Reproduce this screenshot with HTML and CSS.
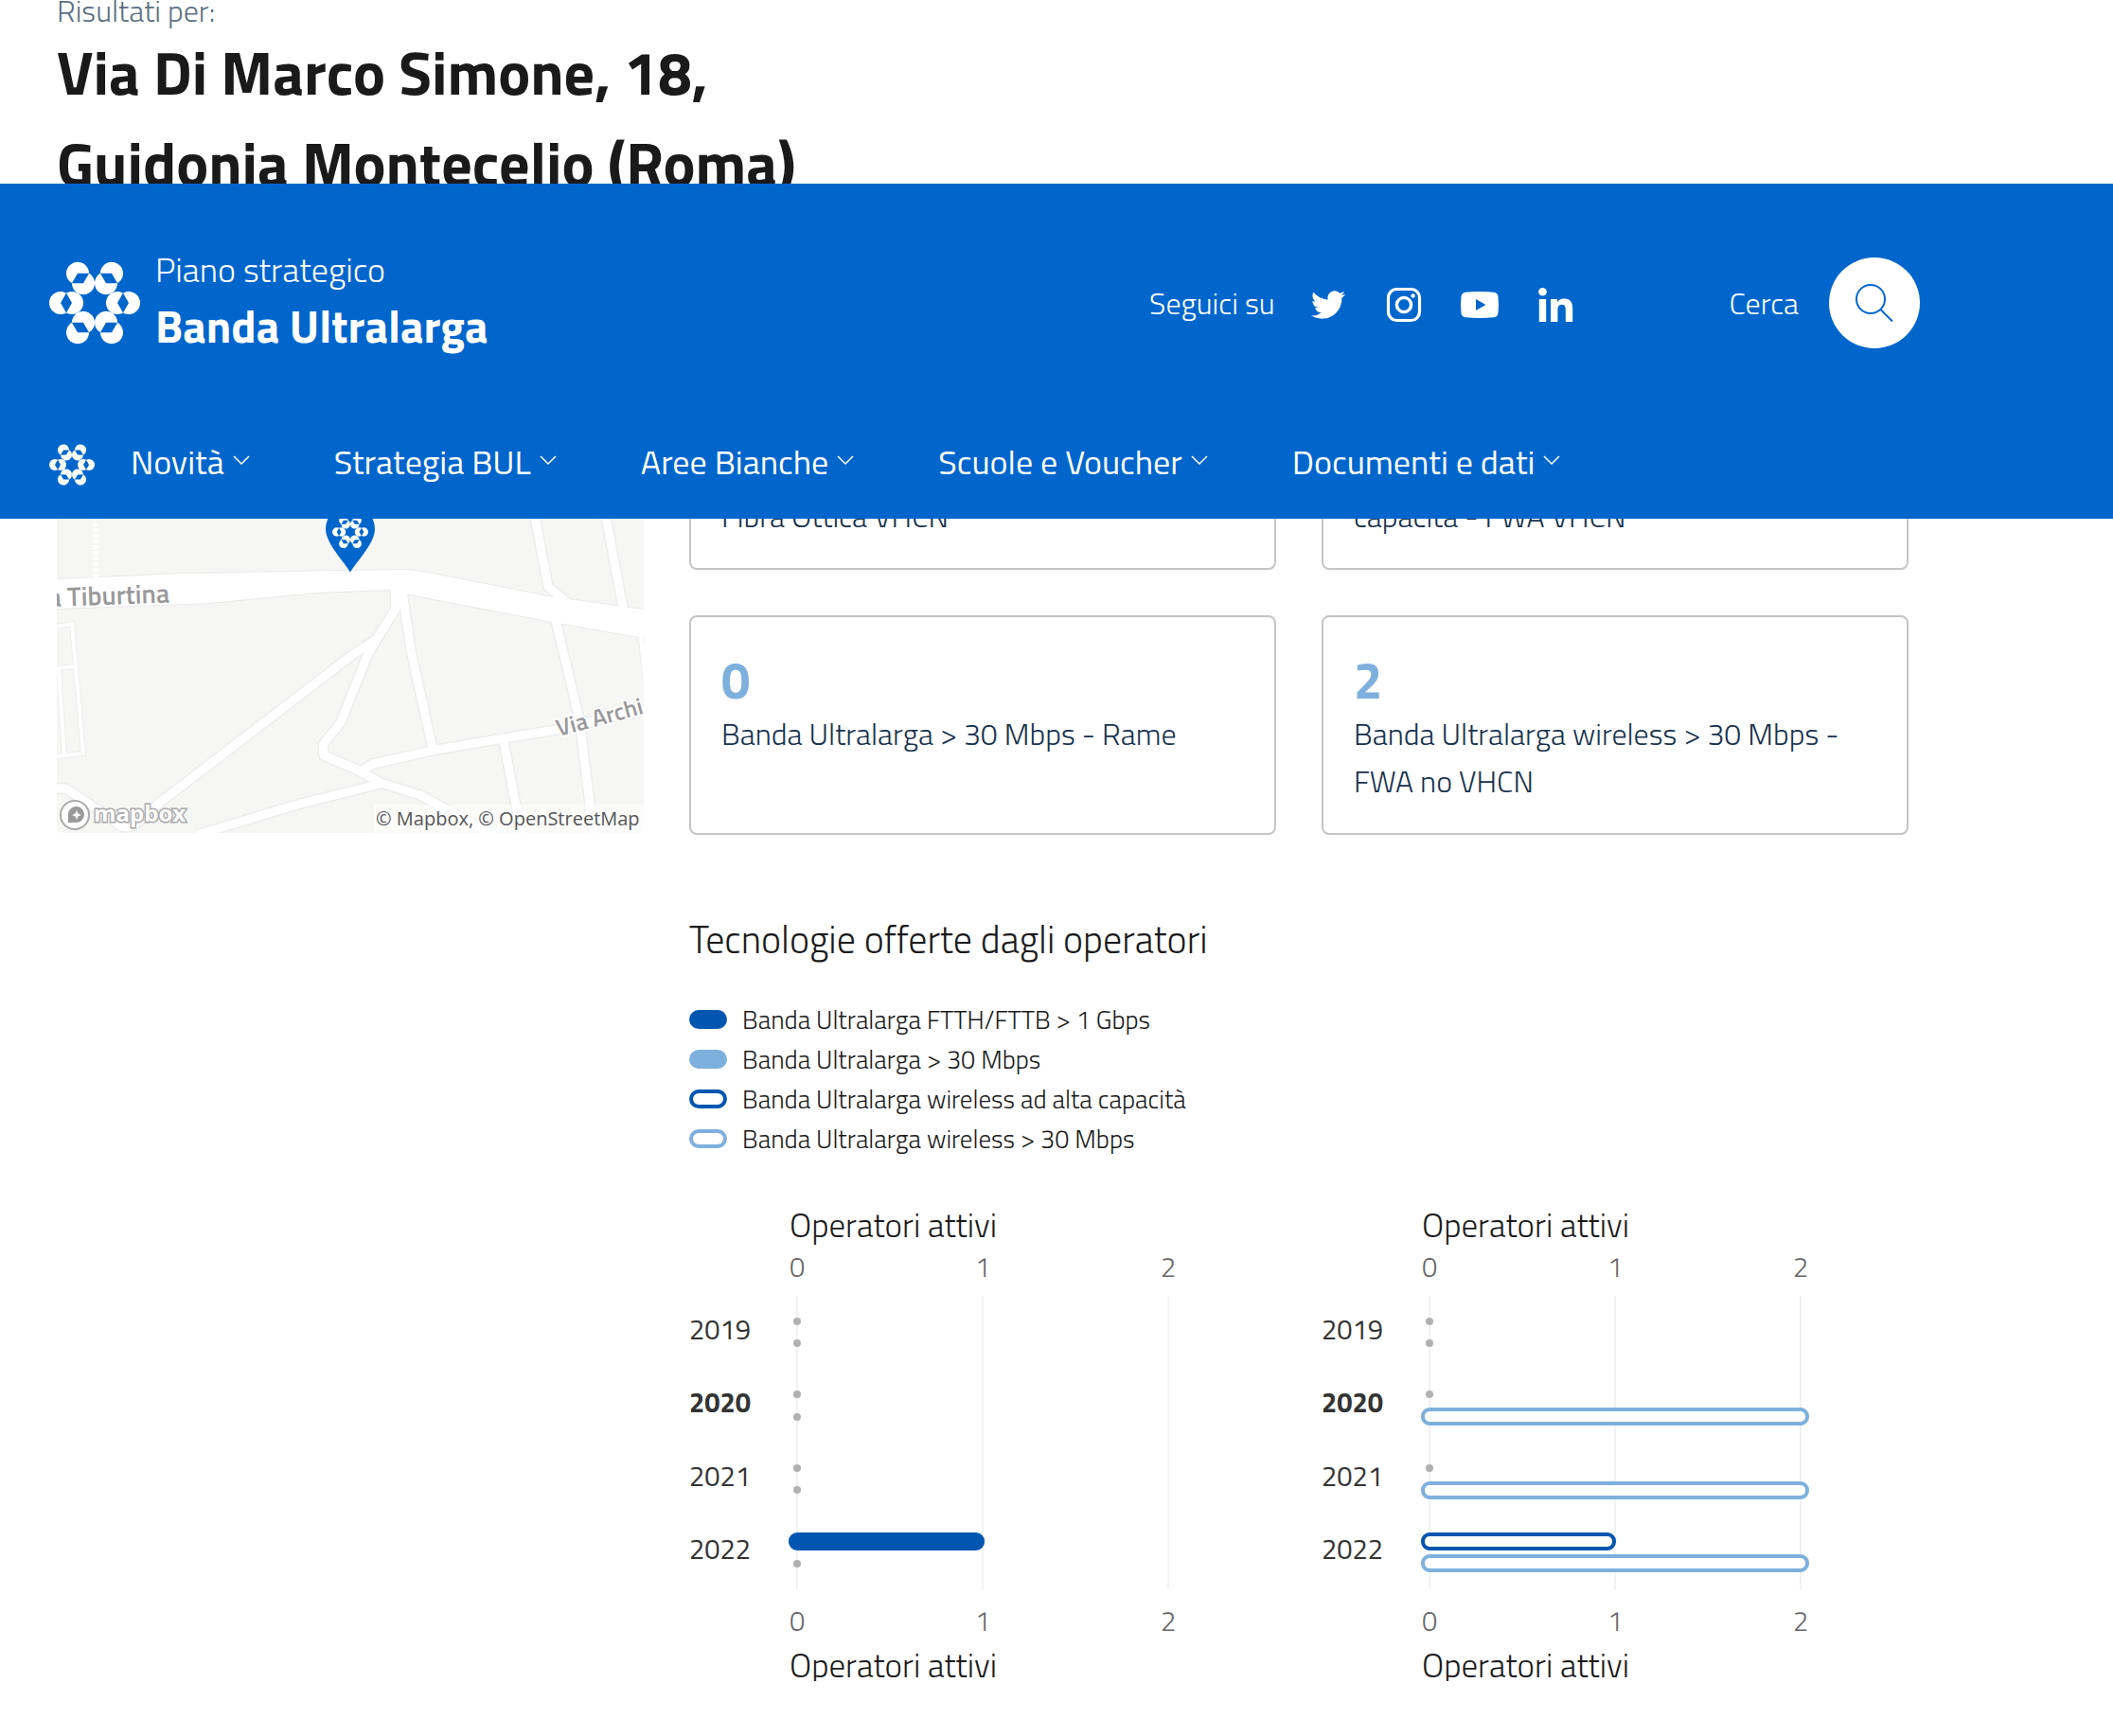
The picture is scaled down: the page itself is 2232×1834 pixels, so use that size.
FILE: index.html
```html
<!DOCTYPE html>
<html lang="it">
<head>
<meta charset="utf-8">
<meta name="viewport" content="width=device-width, initial-scale=1">
<title>Banda Ultralarga - Via Di Marco Simone, 18, Guidonia Montecelio (Roma)</title>
<link rel="stylesheet" href="styles.css">
</head>
<body>
<svg class="defs" width="0" height="0" aria-hidden="true">
  <defs>
    <g id="petal">
      <circle cx="-36" cy="0" r="12" fill="#fff"/>
      <circle cx="-24" cy="0" r="12" fill="#fff"/>
      <path d="M-36 0l6-10.5 6 10.5-6 10.5z" fill="#06c"/>
    </g>
    <symbol id="logo" viewBox="-48 -48 96 96">
      <use href="#petal"/>
      <use href="#petal" transform="rotate(60)"/>
      <use href="#petal" transform="rotate(120)"/>
      <use href="#petal" transform="rotate(180)"/>
      <use href="#petal" transform="rotate(240)"/>
      <use href="#petal" transform="rotate(300)"/>
    </symbol>
    <symbol id="chevron" viewBox="0 0 18 18">
      <path d="M1 3l8 8 8-8" fill="none" stroke="#fff" stroke-width="1.500"/>
    </symbol>
  </defs>
</svg>

<header class="header">
  <div class="header-main">
    <a class="brand" href="#">
      <svg class="brand-logo" aria-hidden="true"><use href="#logo"/></svg>
      <span class="brand-text">
        <span class="brand-top">Piano strategico</span>
        <span class="brand-name">Banda Ultralarga</span>
      </span>
    </a>
    <div class="social">
      <span>Seguici su</span>
      <a href="#" aria-label="Twitter"><svg viewBox="-4 -4 32 32"><path fill="#fff" d="M23.953 4.57a10 10 0 01-2.825.775 4.958 4.958 0 002.163-2.723c-.951.555-2.005.959-3.127 1.184a4.92 4.92 0 00-8.384 4.482C7.69 8.095 4.067 6.13 1.64 3.162a4.822 4.822 0 00-.666 2.475c0 1.710.870 3.213 2.188 4.096a4.904 4.904 0 01-2.228-.616v.060a4.923 4.923 0 003.946 4.827 4.996 4.996 0 01-2.212.085 4.936 4.936 0 004.604 3.417 9.867 9.867 0 01-6.102 2.105c-.390 0-.779-.023-1.170-.067a13.995 13.995 0 007.557 2.209c9.053 0 13.998-7.496 13.998-13.985 0-.210 0-.420-.015-.630A9.935 9.935 0 0024 4.590z"/></svg></a>
      <a href="#" aria-label="Instagram"><svg viewBox="0 0 48 48" fill="none" stroke="#fff"><rect x="7.500" y="7.500" width="33" height="33" rx="9" stroke-width="3.200"/><circle cx="24" cy="24" r="7.600" stroke-width="3.400"/><circle cx="33.600" cy="14.500" r="2.200" fill="#fff" stroke="none"/></svg></a>
      <a href="#" aria-label="YouTube"><svg viewBox="0 0 48 48"><path fill="#fff" fill-rule="evenodd" d="M9 10.700q15-1.400 30 0 4 .500 4.500 4.500 1 8.800 0 17.600-.500 4-4.500 4.500-15 1.400-30 0-4-.500-4.500-4.500-1-8.800 0-17.600 .500-4 4.500-4.500zM20 18v12l10.500-6z"/></svg></a>
      <a href="#" aria-label="LinkedIn"><svg viewBox="0 0 48 48" fill="#fff"><circle cx="10.500" cy="10.300" r="4.300"/><path d="M6.800 18h7.400v24H6.800zM19 18h7v3.300c1.200-2.200 3.800-3.900 7.400-3.900 7.400 0 8.800 4.900 8.800 11.200V42h-7.400V30.200c0-2.900-.100-6.400-3.900-6.400s-4.500 3-4.500 6.200v12H19z"/></svg></a>
    </div>
    <div class="search">
      <label for="search-button">Cerca</label>
      <button class="search-button" id="search-button" type="button">
        <svg viewBox="0 0 48 48" fill="none" stroke="#06c" stroke-width="2"><circle cx="20" cy="20" r="15"/><path d="M30.500 31l12.500 12.500"/></svg>
      </button>
    </div>
  </div>
  <nav class="nav">
    <a class="nav-home" href="#" aria-label="Home"><svg><use href="#logo"/></svg></a>
    <button type="button">Novità<svg><use href="#chevron"/></svg></button>
    <button type="button">Strategia BUL<svg><use href="#chevron"/></svg></button>
    <button type="button">Aree Bianche<svg><use href="#chevron"/></svg></button>
    <button type="button">Scuole e Voucher<svg><use href="#chevron"/></svg></button>
    <button type="button">Documenti e dati<svg><use href="#chevron"/></svg></button>
  </nav>
</header>

<main class="page">
  <p class="kicker">Risultati per:</p>
  <h1 class="address">Via Di Marco Simone, 18,<br>Guidonia Montecelio (Roma)</h1>

  <div class="results">
    <div class="map">
      <svg viewBox="0 0 620 510" role="img" aria-label="Mappa">
        <defs>
          <g id="roads">
            <path d="M357 250l1 23-20 32-26 17L106 480 84 500q-14 8-22-2L14 466q-4-4-14-3"/>
            <path d="M338 305l-9 15-29 73-19 24 1 11 35 15 25 14 42 13 76 42"/>
            <path d="M365 255l9 62 23 104"/>
            <path d="M319 446l15-9 67-15 71-12 55-9 93-21"/>
            <path d="M342 458l-88 22-106 32"/>
            <path d="M472 413l19 99M527 285l25 105 15 122M504 170l15 80 20 16M579 170l19 102"/>
          </g>
          <g id="lanes">
            <path d="M0 292l16-3 12 137-28 3M0 336l20-2M2 337l6 91M617 303l4 40"/>
          </g>
          <path id="highway" d="M0 242l136-6 160-3 75-1 21 3 127 25 101 14v30l-97-17-156-30-17-4-75 3-114 11-161 6z"/>
        </defs>
        <path fill="#f6f6f4" d="M0 0h620v510H0z"/>
        <use href="#roads" fill="none" stroke="#ebeeed" stroke-width="12" stroke-linejoin="round"/>
        <use href="#lanes" fill="none" stroke="#eceeed" stroke-width="6"/>
        <use href="#highway" fill="none" stroke="#e8ebea" stroke-width="2"/>
        <use href="#roads" fill="none" stroke="#fff" stroke-width="9" stroke-linejoin="round"/>
        <use href="#lanes" fill="none" stroke="#fff" stroke-width="4"/>
        <path d="M41 170v72" stroke="#fff" stroke-width="6" stroke-dasharray="4 2"/>
        <use href="#highway" fill="#fff"/>
        <path fill="#06c" d="M310 235c-3-8-26-30-26-46a26 26 0 0152 0c0 16-23 38-26 46z"/>
        <use href="#logo" x="291" y="173" width="38" height="38"/>
        <text class="map-road" transform="translate(-9 271) rotate(-2)">a Tiburtina</text>
        <text class="map-street" transform="translate(530 408) rotate(-15)">Via Archi</text>
        <g fill="#fff" stroke="#aaa" stroke-width="2">
          <circle cx="19" cy="491" r="15"/>
          <path d="M13 498v-7a7.500 7.500 0 117 7z" fill="#999" stroke="#999"/>
        </g>
        <path d="M21 486l1.500 3.500L26 491l-3.500 1.500L21 496l-1.500-3.500L16 491l3.500-1.500z" fill="#fff"/>
        <text class="map-brand" x="39" y="498">mapbox</text>
        <path fill="#fff" fill-opacity=".5" d="M335 480h285v30H335z"/>
        <text class="map-credit" x="337" y="502">© Mapbox, © OpenStreetMap</text>
      </svg>
    </div>

    <section class="details">
      <div class="cards">
        <div class="card"><p>Fibra Ottica VHCN</p></div>
        <div class="card"><p>capacità - FWA VHCN</p></div>
        <div class="card"><strong>0</strong><p>Banda Ultralarga &gt; 30 Mbps - Rame<br>&nbsp;</p></div>
        <div class="card"><strong>2</strong><p>Banda Ultralarga wireless &gt; 30 Mbps - FWA no VHCN</p></div>
      </div>

      <h2 class="section-title">Tecnologie offerte dagli operatori</h2>
      <ul class="legend">
        <li><span class="swatch fiber"></span>Banda Ultralarga FTTH/FTTB &gt; 1 Gbps</li>
        <li><span class="swatch copper"></span>Banda Ultralarga &gt; 30 Mbps</li>
        <li><span class="swatch wireless-high"></span>Banda Ultralarga wireless ad alta capacità</li>
        <li><span class="swatch wireless"></span>Banda Ultralarga wireless &gt; 30 Mbps</li>
      </ul>

      <div class="charts">
        <svg class="chart" width="560" height="511" role="img" aria-label="Operatori attivi, rete fissa">
          <path class="grid" d="M114 104v310M310 104v310M506 104v310"/>
          <text class="axis-title" x="106" y="42">Operatori attivi</text>
          <g class="ticks"><text x="114" y="84">0</text><text x="310" y="84">1</text><text x="506" y="84">2</text></g>
          <g class="years"><text x="0" y="150">2019</text><text class="current" x="0" y="227">2020</text><text x="0" y="305">2021</text><text x="0" y="382">2022</text></g>
          <g class="zero"><circle cx="114" cy="131" r="4"/><circle cx="114" cy="154" r="4"/><circle cx="114" cy="208" r="4"/><circle cx="114" cy="232" r="4"/><circle cx="114" cy="286" r="4"/><circle cx="114" cy="309" r="4"/><circle cx="114" cy="387" r="4"/></g>
          <rect class="bar bar-fiber" x="107" y="356" width="203" height="15" rx="7"/>
          <g class="ticks"><text x="114" y="458">0</text><text x="310" y="458">1</text><text x="506" y="458">2</text></g>
          <text class="axis-title" x="106" y="507">Operatori attivi</text>
        </svg>
        <svg class="chart" width="560" height="511" role="img" aria-label="Operatori attivi, rete wireless">
          <path class="grid" d="M114 104v310M310 104v310M506 104v310"/>
          <text class="axis-title" x="106" y="42">Operatori attivi</text>
          <g class="ticks"><text x="114" y="84">0</text><text x="310" y="84">1</text><text x="506" y="84">2</text></g>
          <g class="years"><text x="0" y="150">2019</text><text class="current" x="0" y="227">2020</text><text x="0" y="305">2021</text><text x="0" y="382">2022</text></g>
          <g class="zero"><circle cx="114" cy="131" r="4"/><circle cx="114" cy="154" r="4"/><circle cx="114" cy="208" r="4"/><circle cx="114" cy="286" r="4"/></g>
          <rect class="bar bar-wireless" x="107" y="224" width="406" height="15" rx="7"/>
          <rect class="bar bar-wireless" x="107" y="302" width="406" height="15" rx="7"/>
          <rect class="bar bar-wireless-high" x="107" y="356" width="202" height="15" rx="7"/>
          <rect class="bar bar-wireless" x="107" y="379" width="406" height="15" rx="7"/>
          <g class="ticks"><text x="114" y="458">0</text><text x="310" y="458">1</text><text x="506" y="458">2</text></g>
          <text class="axis-title" x="106" y="507">Operatori attivi</text>
        </svg>
      </div>
    </section>
  </div>
</main>
</body>
</html>
```

FILE: styles.css
```css
* { box-sizing: border-box; }

body {
  margin: 0;
  background: #fff;
  color: #1a1a1a;
  font-family: "Titillium Web", Roboto, sans-serif;
  font-weight: 300;
}

p, h1, h2, ul { margin: 0; padding: 0; }
button { border: 0; background: none; padding: 0; color: inherit; font: inherit; cursor: pointer; }
a { color: inherit; text-decoration: none; }
svg { display: block; }
.defs { position: absolute; }

/* Header, floating over the scrolled page */
.header {
  position: absolute;
  top: 194px;
  left: 0;
  right: 0;
  z-index: 2;
  padding: 66px 204px 30px 52px;
  background: #06c;
  color: #fff;
}
.header-main { display: flex; align-items: center; min-height: 120px; }
.brand { display: flex; align-items: center; gap: 16px; margin-right: auto; }
.brand-logo { width: 96px; height: 96px; }
.brand-text { display: flex; flex-direction: column; }
.brand-top { font-size: 36px; line-height: 50px; }
.brand-name { font-size: 48px; line-height: 70px; font-weight: 700; }
.social { display: flex; align-items: center; gap: 32px; font-size: 32px; margin-right: 160px; }
.social a { padding-top: 4px; }
.social svg { width: 48px; height: 48px; }
.search { display: flex; align-items: center; gap: 32px; font-size: 32px; }
.search-button {
  display: flex;
  align-items: center;
  justify-content: center;
  width: 96px;
  height: 96px;
  border-radius: 50%;
  background: #fff;
}
.search-button svg { width: 48px; height: 48px; }

.nav { display: flex; align-items: center; gap: 89px; margin-top: 84px; font-size: 36px; line-height: 48px; font-weight: 400; }
.nav-home { margin-right: -51px; }
.nav-home svg { width: 48px; height: 48px; }
.nav button { display: flex; align-items: center; gap: 9px; padding-bottom: 6px; }
.nav button svg { width: 18px; height: 18px; }

/* Page */
.page { padding: 0 216px 58px 60px; }
.kicker { font-size: 32px; line-height: 22px; color: #5b6f82; }
.address { margin-top: 6px; font-size: 64px; line-height: 96px; font-weight: 700; }
.results { display: grid; grid-template-columns: repeat(3, 1fr); gap: 48px; margin-top: 150px; align-items: start; }
.details { grid-column: span 2; }

.map { overflow: hidden; border-radius: 8px; }
.map svg { width: 100%; height: auto; }
.map-road, .map-street { fill: #999; stroke: #fff; stroke-width: 3px; paint-order: stroke; }
.map-road { font-size: 28px; font-weight: 600; }
.map-street { font-size: 25px; font-weight: 600; }
.map-brand { font: 700 24px "Open Sans", sans-serif; fill: #fff; stroke: #aaa; stroke-width: 3px; paint-order: stroke; }
.map-credit { font: 400 20px "Open Sans", sans-serif; fill: #555; }

.cards { display: grid; grid-template-columns: repeat(2, 1fr); gap: 48px; }
.card {
  display: flex;
  flex-direction: column;
  justify-content: flex-end;
  min-height: 232px;
  padding: 34px 32px 30px;
  border: 2px solid #c5c5c5;
  border-radius: 8px;
  background: #fff;
}
.card strong { font-size: 54px; line-height: 64px; font-weight: 700; color: #7eb0dd; }
.card p { font-size: 32px; line-height: 50px; color: #17324d; }

.section-title { margin-top: 87px; font-size: 40px; line-height: 48px; font-weight: 300; }
.legend { margin-top: 39px; list-style: none; font-size: 27px; line-height: 42px; }
.legend li { display: flex; align-items: center; gap: 16px; }
.swatch { width: 40px; height: 20px; border: 4px solid; border-radius: 10px; }
.fiber { border-color: #0056b0; background: #0056b0; }
.copper { border-color: #7eb0dd; background: #7eb0dd; }
.wireless-high { border-color: #0056b0; }
.wireless { border-color: #7eb0dd; }

/* Charts */
.charts { display: grid; grid-template-columns: repeat(2, 1fr); gap: 48px; margin-top: 41px; }
.chart { overflow: hidden; }
.grid { stroke: #f2f2f2; stroke-width: 2px; }
.axis-title { font-size: 35px; fill: #1a1a1a; }
.ticks { font-size: 29px; text-anchor: middle; fill: #666; }
.years { font-size: 29px; font-weight: 400; fill: #333; }
.current { font-weight: 700; }
.zero { fill: #b1b1b1; }
.bar { fill: #fff; stroke-width: 4px; }
.bar-fiber { fill: #0056b0; stroke: #0056b0; }
.bar-wireless { stroke: #7eb0dd; }
.bar-wireless-high { stroke: #0056b0; }
```
